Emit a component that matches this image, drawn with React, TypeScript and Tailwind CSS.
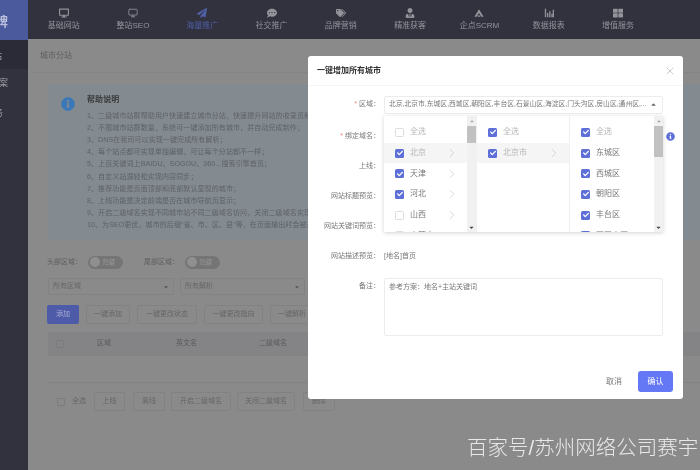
import { ChevronRight, Monitor, X } from 'lucide-react';
import { FaCheck, FaCommentDots, FaTags, FaUserTie, FaThLarge, FaPaperPlane, FaDesktop, FaCaretDown, FaCaretUp, FaInfoCircle } from 'react-icons/fa';

function ScrmIcon({ className }: { className?: string }) {
  return (
    <svg viewBox="0 0 12 12" className={className} fill="currentColor">
      <path d="M6 1.5 11.5 10.5H8.6L6 6 3.4 10.5H.5Z" />
      <path d="M4.6 9h2.8v1.5H4.6Z" />
    </svg>
  );
}

function BarsIcon({ className }: { className?: string }) {
  return (
    <svg viewBox="0 0 12 12" className={className} fill="currentColor">
      <path d="M1 1h1.6v10H1ZM3.6 6h1.6v5H3.6ZM6.2 4h1.6v7H6.2ZM8.8 7h1.4v4H8.8ZM10.4 2H12v9h-1.6Z" />
    </svg>
  );
}

const nav = [
  { label: '基础网站', icon: FaDesktop },
  { label: '整站SEO', icon: Monitor },
  { label: '海量推广', icon: FaPaperPlane, active: true },
  { label: '社交推广', icon: FaCommentDots },
  { label: '品牌营销', icon: FaTags },
  { label: '精准获客', icon: FaUserTie },
  { label: '企点SCRM', icon: ScrmIcon },
  { label: '数据报表', icon: BarsIcon },
  { label: '增值服务', icon: FaThLarge },
];

const help = [
  '1、二级城市站群帮助用户快速建立城市分站，快速提升网站的收录页和排名；',
  '2、不限城市站群数量，系统可一键添加所有城市，并自动完成制作；',
  '3、DNS在我司可以实现一键完成所有解析；',
  '4、每个站点都可实现单独编辑，可让每个分站都不一样；',
  '5、上百关键词上BAIDU、SOGOU、360...搜索引擎首页；',
  '6、自定义站源轻松实现内容同步；',
  '7、推荐功能是页面顶部和底部默认显现的城市；',
  '8、上线功能是决定前端是否在城市导航页显示；',
  '9、开启二级域名实现不同城市站不同二级域名访问，关闭二级域名实现同域名访问；',
  '10、为SEO更优，城市的后缀“省、市、区、县”等，在页面输出时会被过滤；',
];

function Box({ on }: { on?: boolean }) {
  return on ? (
    <span className="flex h-[9px] w-[9px] shrink-0 items-center justify-center rounded-[1.5px] bg-[#5f6fd8] text-white">
      <FaCheck className="h-[6px] w-[6px]" />
    </span>
  ) : (
    <span className="h-[9px] w-[9px] shrink-0 rounded-[1.5px] border border-[#dcdcdc] bg-white" />
  );
}

function OptionRow({ label, on, arrow, hot, muted }: { label: string; on?: boolean; arrow?: boolean; hot?: boolean; muted?: boolean }) {
  return (
    <div className={`flex h-[20.7px] shrink-0 items-center pr-[8px] pl-[11px] ${hot ? 'bg-[#f5f5f5]' : ''}`}>
      <Box on={on} />
      <span className={`ml-[6px] flex-1 ${muted ? 'text-[#b5b5b5]' : 'text-[#777]'}`}>{label}</span>
      {arrow && <ChevronRight className="h-[14px] w-[14px] text-[#bbb]" strokeWidth={1} />}
    </div>
  );
}

function Scrollbar({ thumb }: { thumb: string }) {
  return (
    <div className="flex w-[9px] shrink-0 flex-col bg-[#f1f1f1]">
      <div className="flex h-[10px] items-center justify-center">
        <FaCaretUp className="h-[6px] w-[6px] text-[#aaa]" />
      </div>
      <div className={`w-full bg-[#c1c1c1] ${thumb}`} />
      <div className="mt-auto flex h-[10px] items-center justify-center">
        <FaCaretDown className="h-[7px] w-[7px] text-[#444]" />
      </div>
    </div>
  );
}

function Ghost({ label, w }: { label: string; w: string }) {
  return <div className={`flex h-[19px] shrink-0 items-center justify-center rounded-[2px] border border-[#828282] ${w}`}>{label}</div>;
}

function FormRow({ label, required, h, children }: { label: string; required?: boolean; h: string; children?: React.ReactNode }) {
  return (
    <div className={`flex items-center ${h}`}>
      <div className="w-[72px] shrink-0 text-right text-[#777]">
        {required && <span className="text-[#e88]">* </span>}
        {label}：
      </div>
      <div className="ml-[4px] min-w-0 flex-1">{children}</div>
    </div>
  );
}

export default function App() {
  return (
    <div className="relative flex h-[470px] w-[700px] overflow-hidden bg-[#8a8a8a] text-[7px] text-[#5e5e5e] blur-[0.3px] [font-family:'Liberation_Sans','Noto_Sans_CJK_SC',sans-serif]">
      {/* side bar */}
      <aside className="flex w-[28px] shrink-0 flex-col bg-[#31323e] text-[#a4a4a8]">
        <div className="flex h-[40px] items-center overflow-hidden bg-[#4b5a9c] pt-[3px] text-[13px] font-bold text-[#b9bfdc]">
          <span className="-ml-[5px]">牌</span>
        </div>
        <div className="flex h-[29px] items-center overflow-hidden bg-[#2a2b36] pt-[4px] text-[9px]"><span className="-ml-[7px]">站</span></div>
        <div className="flex h-[30px] items-center overflow-hidden text-[9px]"><span className="-ml-[1px]">案</span></div>
        <div className="flex h-[29px] items-center overflow-hidden text-[9px]"><span className="-ml-[6px]">务</span></div>
      </aside>

      <div className="flex min-w-0 flex-1 flex-col">
        {/* top nav */}
        <nav className="flex h-[39px] shrink-0 bg-[#31323e] pr-[28px] pl-[1px] text-[#93939a]">
          {nav.map(({ label, icon: Icon, active }) => (
            <div key={label} className={`flex w-[69.3px] flex-col items-center pt-[8px] text-[8px] ${active ? 'text-[#4f5fa8]' : ''}`}>
              <Icon className="h-[10px] w-[10px]" />
              <span className="mt-[3px] leading-[10px] whitespace-nowrap">{label}</span>
            </div>
          ))}
        </nav>

        <main className="ml-[2px] flex-1">
          <div className="flex h-[34px] items-center border-b border-[#848484] pt-[1px] pl-[10px] text-[8px] text-[#5e5e5e]">城市分站</div>

          <section className="mt-[11px] ml-[18px] flex h-[156px] bg-[#838a90]">
            <div className="pt-[13px] pl-[13px] text-[#3a78b8]">
              <FaInfoCircle className="h-[14px] w-[14px]" />
            </div>
            <div className="ml-[12px] pt-[10px] leading-[12.1px] tracking-[0.1px] whitespace-nowrap text-[#5e6266]">
              <div className="mb-[4px] text-[8px] font-bold text-[#3a3a3a]">帮助说明</div>
              {help.map((line) => (
                <div key={line}>{line}</div>
              ))}
            </div>
          </section>

          <div className="mt-[14px] ml-[17px] flex h-[16px] items-center text-[#5e5e5e]">
            <span>头部区域：</span>
            <span className="ml-[6px] flex h-[13px] w-[35px] items-center rounded-full bg-[#757575] pl-[2px] text-[6px]">
              <span className="h-[10px] w-[10px] rounded-full bg-[#8f8f8f]" />
              <span className="ml-[3px] text-[#999]">隐藏</span>
            </span>
            <span className="ml-[21px]">尾部区域：</span>
            <span className="ml-[6px] flex h-[13px] w-[35px] items-center rounded-full bg-[#757575] pl-[2px] text-[6px]">
              <span className="h-[10px] w-[10px] rounded-full bg-[#8f8f8f]" />
              <span className="ml-[3px] text-[#999]">隐藏</span>
            </span>
          </div>

          <div className="mt-[8px] ml-[18px] flex gap-[6px] text-[#666]">
            <div className="flex h-[17px] w-[126px] items-center justify-between rounded-[2px] border border-[#828282] px-[4px]">所有区域<FaCaretDown className="h-[6px] w-[6px] text-[#555]" /></div>
            <div className="flex h-[17px] w-[125px] items-center justify-between rounded-[2px] border border-[#828282] px-[4px]">所有解析<FaCaretDown className="h-[6px] w-[6px] text-[#555]" /></div>
          </div>

          <div className="mt-[10px] ml-[17px] flex gap-[7px] text-[#666]">
            <div className="flex h-[19px] w-[32px] shrink-0 items-center justify-center rounded-[2px] bg-[#4e5ba8] text-[#a9aed6]">添加</div>
            <Ghost label="一键添加" w="w-[44px]" />
            <Ghost label="一键更改状态" w="w-[60px]" />
            <Ghost label="一键更改指向" w="w-[59px]" />
            <Ghost label="一键解析" w="w-[44px]" />
          </div>

          <div className="mt-[8px] ml-[18px] flex h-[24px] items-center border-b border-[#828282] bg-[#848486] text-[#5a5a5a]">
            <span className="ml-[8px] h-[8px] w-[8px] rounded-[1px] border border-[#7c7c7c]" />
            <span className="ml-[33px] w-[79px]">区域</span>
            <span className="w-[83px]">英文名</span>
            <span>二级域名</span>
          </div>
          <div className="ml-[18px] h-[27px] border-b border-[#828282]" />

          <div className="mt-[9px] flex items-center text-[#666]">
            <span className="ml-[27px] h-[8px] w-[8px] shrink-0 rounded-[1px] border border-[#7c7c7c]" />
            <span className="ml-[7px]">全选</span>
            <Ghost label="上线" w="ml-[8px] w-[31px]" />
            <Ghost label="离线" w="ml-[8px] w-[32px]" />
            <Ghost label="开启二级域名" w="ml-[6px] w-[60px]" />
            <Ghost label="关闭二级域名" w="ml-[6px] w-[58px]" />
            <Ghost label="删除" w="ml-[8px] w-[32px]" />
          </div>
        </main>
      </div>

      {/* dialog */}
      <div className="absolute top-[56px] left-[308px] flex h-[343px] w-[375px] flex-col rounded-[3px] bg-white text-[#777]">
        <header className="flex h-[30px] shrink-0 items-center justify-between border-b border-[#f5f5f5] pr-[7px] pl-[9px]">
          <span className="text-[8px] font-bold text-[#333]">一键增加所有城市</span>
          <X className="h-[12px] w-[12px] text-[#999]" strokeWidth={1} />
        </header>
        <div className="pt-[9px] pr-[20px]">
          <FormRow label="区域" required h="h-[19px]">
            <div className="flex h-[18px] items-center rounded-[2px] border border-[#ececec] pr-[5px] pl-[4px]">
              <span className="min-w-0 flex-1 overflow-hidden text-[6.8px] whitespace-nowrap">北京,北京市,东城区,西城区,朝阳区,丰台区,石景山区,海淀区,门头沟区,房山区,通州区,...</span>
              <FaCaretUp className="ml-[2px] h-[7px] w-[7px] shrink-0 text-[#666]" />
            </div>
          </FormRow>
          <FormRow label="绑定域名" required h="mt-[7px] h-[30px]" />
          <FormRow label="上线" h="h-[30px]" />
          <FormRow label="网站标题预览" h="h-[31px]" />
          <FormRow label="网站关键词预览" h="h-[29px]" />
          <FormRow label="网站描述预览" h="h-[31px]">
            <span>[地名]首页</span>
          </FormRow>
          <div className="mt-[6px] flex">
            <div className="w-[72px] shrink-0 pt-[3px] text-right">备注：</div>
            <div className="ml-[4px] h-[58px] flex-1 rounded-[2px] border border-[#ececec] px-[4px] py-[3px]">参考方案：地名+主站关键词</div>
          </div>
        </div>
        <footer className="mt-auto flex items-center justify-end gap-[16px] pr-[10px] pb-[7px] text-[8px]">
          <span>取消</span>
          <div className="flex h-[21px] w-[35px] items-center justify-center rounded-[3px] bg-[#6478f5] text-white">确认</div>
        </footer>

        {/* cascader */}
        <div className="absolute top-[60px] left-[76px] flex h-[116px] w-[279px] overflow-hidden bg-white text-[8px] shadow-[0_1px_4px_rgba(0,0,0,0.18)]">
          <div className="flex w-[93px] border-r border-[#f0f0f0]">
            <div className="flex min-w-0 flex-1 flex-col pt-[6px]">
              <OptionRow label="全选" muted />
              <OptionRow label="北京" on arrow hot muted />
              <OptionRow label="天津" on arrow />
              <OptionRow label="河北" on arrow />
              <OptionRow label="山西" arrow />
              <OptionRow label="内蒙古" arrow />
            </div>
            <Scrollbar thumb="h-[17px]" />
          </div>
          <div className="flex w-[93px] flex-col border-r border-[#f0f0f0] pt-[6px]">
            <OptionRow label="全选" on muted />
            <OptionRow label="北京市" on arrow hot muted />
          </div>
          <div className="flex min-w-0 flex-1">
            <div className="flex min-w-0 flex-1 flex-col pt-[6px]">
              <OptionRow label="全选" on muted />
              <OptionRow label="东城区" on />
              <OptionRow label="西城区" on />
              <OptionRow label="朝阳区" on />
              <OptionRow label="丰台区" on />
              <OptionRow label="石景山区" on />
            </div>
            <Scrollbar thumb="h-[31px]" />
          </div>
        </div>
        <FaInfoCircle className="absolute top-[76px] left-[358px] h-[9px] w-[9px] text-[#5f6fd8]" />
      </div>

      {/* watermark */}
      <div className="absolute top-[433px] left-[467px] text-[20.5px] leading-[30px] font-light whitespace-nowrap text-white/80">百家号/苏州网络公司赛宇</div>
    </div>
  );
}
